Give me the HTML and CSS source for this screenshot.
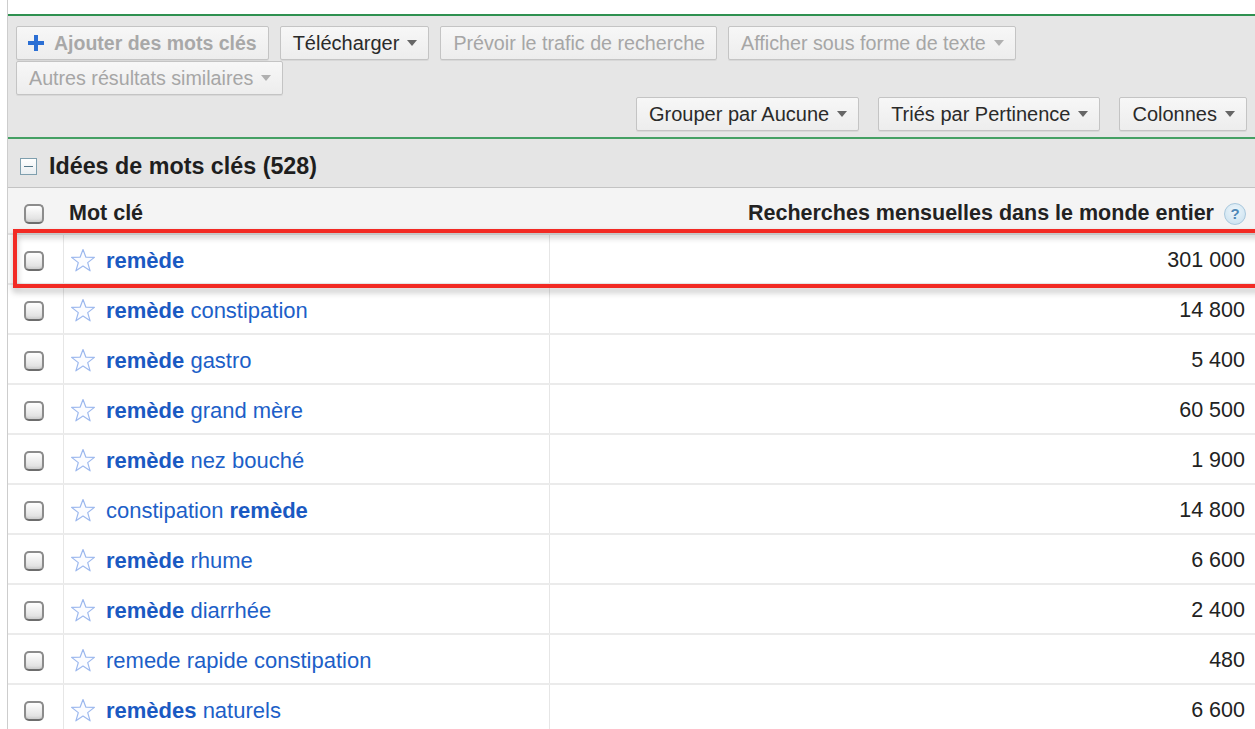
FILE: index.html
```html
<!DOCTYPE html>
<html lang="fr">
<head>
<meta charset="utf-8">
<title>Idées de mots clés</title>
<link rel="stylesheet" href="styles.css">
</head>
<body>
<div class="page">
  <div class="panel">
    <div class="toolbar">
      <div class="tb-row">
        <button class="btn btn-off btn-add">
          <svg class="plus" viewBox="0 0 16 16" width="16" height="16"><path d="M6 0h4v6h6v4h-6v6h-4v-6h-6v-4h6z" fill="#2b6fd4"/></svg>
          Ajouter des mots clés
        </button>
        <button class="btn">Télécharger <span class="caret"></span></button>
        <button class="btn btn-off">Prévoir le trafic de recherche</button>
        <button class="btn btn-off">Afficher sous forme de texte <span class="caret"></span></button>
      </div>
      <div class="tb-row">
        <button class="btn btn-off">Autres résultats similaires <span class="caret"></span></button>
      </div>
      <div class="tb-row tb-right">
        <button class="btn">Grouper par Aucune <span class="caret"></span></button>
        <button class="btn">Triés par Pertinence <span class="caret"></span></button>
        <button class="btn">Colonnes <span class="caret"></span></button>
      </div>
    </div>

    <div class="results">
      <div class="group-head">
        <span class="collapse"></span>
        <span>Idées de mots clés (528)</span>
      </div>

      <div class="row row-head">
        <div class="cell cell-check"><span class="check"></span></div>
        <div class="cell cell-kw">Mot clé</div>
        <div class="cell cell-num">Recherches mensuelles dans le monde entier <span class="help">?</span></div>
      </div>

      <div class="row">
        <div class="cell cell-check"><span class="check"></span></div>
        <div class="cell cell-kw"><svg class="star" viewBox="0 0 26 25" width="26" height="25"><polygon points="13,1.5 15.9,9.2 24.4,9.4 17.7,14.6 20.1,22.8 13,18 5.9,22.8 8.3,14.6 1.6,9.4 10.1,9.2" /></svg><a class="kw"><b>remède</b></a></div>
        <div class="cell cell-num">301 000</div>
      </div>
      <div class="row">
        <div class="cell cell-check"><span class="check"></span></div>
        <div class="cell cell-kw"><svg class="star" viewBox="0 0 26 25" width="26" height="25"><polygon points="13,1.5 15.9,9.2 24.4,9.4 17.7,14.6 20.1,22.8 13,18 5.9,22.8 8.3,14.6 1.6,9.4 10.1,9.2" /></svg><a class="kw"><b>remède</b> constipation</a></div>
        <div class="cell cell-num">14 800</div>
      </div>
      <div class="row">
        <div class="cell cell-check"><span class="check"></span></div>
        <div class="cell cell-kw"><svg class="star" viewBox="0 0 26 25" width="26" height="25"><polygon points="13,1.5 15.9,9.2 24.4,9.4 17.7,14.6 20.1,22.8 13,18 5.9,22.8 8.3,14.6 1.6,9.4 10.1,9.2" /></svg><a class="kw"><b>remède</b> gastro</a></div>
        <div class="cell cell-num">5 400</div>
      </div>
      <div class="row">
        <div class="cell cell-check"><span class="check"></span></div>
        <div class="cell cell-kw"><svg class="star" viewBox="0 0 26 25" width="26" height="25"><polygon points="13,1.5 15.9,9.2 24.4,9.4 17.7,14.6 20.1,22.8 13,18 5.9,22.8 8.3,14.6 1.6,9.4 10.1,9.2" /></svg><a class="kw"><b>remède</b> grand mère</a></div>
        <div class="cell cell-num">60 500</div>
      </div>
      <div class="row">
        <div class="cell cell-check"><span class="check"></span></div>
        <div class="cell cell-kw"><svg class="star" viewBox="0 0 26 25" width="26" height="25"><polygon points="13,1.5 15.9,9.2 24.4,9.4 17.7,14.6 20.1,22.8 13,18 5.9,22.8 8.3,14.6 1.6,9.4 10.1,9.2" /></svg><a class="kw"><b>remède</b> nez bouché</a></div>
        <div class="cell cell-num">1 900</div>
      </div>
      <div class="row">
        <div class="cell cell-check"><span class="check"></span></div>
        <div class="cell cell-kw"><svg class="star" viewBox="0 0 26 25" width="26" height="25"><polygon points="13,1.5 15.9,9.2 24.4,9.4 17.7,14.6 20.1,22.8 13,18 5.9,22.8 8.3,14.6 1.6,9.4 10.1,9.2" /></svg><a class="kw">constipation <b>remède</b></a></div>
        <div class="cell cell-num">14 800</div>
      </div>
      <div class="row">
        <div class="cell cell-check"><span class="check"></span></div>
        <div class="cell cell-kw"><svg class="star" viewBox="0 0 26 25" width="26" height="25"><polygon points="13,1.5 15.9,9.2 24.4,9.4 17.7,14.6 20.1,22.8 13,18 5.9,22.8 8.3,14.6 1.6,9.4 10.1,9.2" /></svg><a class="kw"><b>remède</b> rhume</a></div>
        <div class="cell cell-num">6 600</div>
      </div>
      <div class="row">
        <div class="cell cell-check"><span class="check"></span></div>
        <div class="cell cell-kw"><svg class="star" viewBox="0 0 26 25" width="26" height="25"><polygon points="13,1.5 15.9,9.2 24.4,9.4 17.7,14.6 20.1,22.8 13,18 5.9,22.8 8.3,14.6 1.6,9.4 10.1,9.2" /></svg><a class="kw"><b>remède</b> diarrhée</a></div>
        <div class="cell cell-num">2 400</div>
      </div>
      <div class="row">
        <div class="cell cell-check"><span class="check"></span></div>
        <div class="cell cell-kw"><svg class="star" viewBox="0 0 26 25" width="26" height="25"><polygon points="13,1.5 15.9,9.2 24.4,9.4 17.7,14.6 20.1,22.8 13,18 5.9,22.8 8.3,14.6 1.6,9.4 10.1,9.2" /></svg><a class="kw">remede rapide constipation</a></div>
        <div class="cell cell-num">480</div>
      </div>
      <div class="row">
        <div class="cell cell-check"><span class="check"></span></div>
        <div class="cell cell-kw"><svg class="star" viewBox="0 0 26 25" width="26" height="25"><polygon points="13,1.5 15.9,9.2 24.4,9.4 17.7,14.6 20.1,22.8 13,18 5.9,22.8 8.3,14.6 1.6,9.4 10.1,9.2" /></svg><a class="kw"><b>remèdes</b> naturels</a></div>
        <div class="cell cell-num">6 600</div>
      </div>

      <div class="highlight"></div>
    </div>
  </div>
</div>
</body>
</html>
```

FILE: styles.css
```css
html, body {
  margin: 0;
  padding: 0;
  background: #fff;
  overflow: hidden;
  font-family: "Liberation Sans", Arial, sans-serif;
  color: #222;
}

.page {
  padding-left: 7px;
}

.panel {
  border-left: 1px solid #cdcdcd;
  padding-top: 14px;
  min-height: 729px;
}

/* ---- toolbar ---- */
.toolbar {
  background: #e6e6e6;
  border-top: 2px solid #2f9150;
  border-bottom: 2px solid #45a064;
  padding: 10px 8px 6px 8px;
  display: flex;
  flex-direction: column;
  gap: 1px;
}

.tb-row {
  display: flex;
  gap: 11px;
}

.tb-right {
  justify-content: flex-end;
  gap: 19px;
  margin-top: 1px;
}

.btn {
  height: 34px;
  box-sizing: border-box;
  display: inline-flex;
  align-items: center;
  padding: 0 11px 0 12px;
  border: 1px solid #c4c4c4;
  border-radius: 2px;
  background: linear-gradient(#f7f7f7, #ededed);
  box-shadow: 0 1px 0 rgba(0, 0, 0, 0.06);
  font-family: inherit;
  font-size: 20px;
  color: #2a2a2a;
  white-space: nowrap;
}

.btn-off {
  font-size: 19.7px;
  color: #a6a6a6;
}

.btn-add {
  font-weight: bold;
  font-size: 19.5px;
  padding-left: 11px;
  color: #a8a8a8;
}

.plus {
  margin-right: 10px;
}

.caret {
  display: inline-block;
  width: 0;
  height: 0;
  margin-left: 8px;
  border-left: 5.5px solid transparent;
  border-right: 5.5px solid transparent;
  border-top: 6px solid #666;
}

.btn-off .caret {
  border-top-color: #b0b0b0;
}

/* ---- results ---- */
.results {
  position: relative;
}

.group-head {
  height: 49px;
  box-sizing: border-box;
  background: #e5e5e5;
  border-bottom: 1px solid #c3c3c3;
  display: flex;
  align-items: center;
  gap: 12px;
  padding: 6px 0 0 12px;
  font-size: 23.3px;
  font-weight: bold;
  color: #1e1e1e;
}

.collapse {
  position: relative;
  width: 17px;
  height: 17px;
  box-sizing: border-box;
  border: 1px solid #7f9fae;
  background: linear-gradient(#ffffff, #e9eef1);
}

.collapse::after {
  content: "";
  position: absolute;
  left: 3px;
  right: 3px;
  top: 7px;
  height: 1px;
  background: #55788a;
}

.row {
  display: grid;
  grid-template-columns: 56px 486px 1fr;
  height: 50px;
  box-sizing: border-box;
  border-bottom: 2px solid #ebebeb;
  background: #fff;
}

.row-head {
  height: 47px;
  padding-top: 3px;
  background: #f4f4f4;
  border-bottom-color: #e2e2e2;
  font-size: 21.5px;
  font-weight: bold;
  color: #222;
}

.cell {
  display: flex;
  align-items: center;
  min-width: 0;
}

.row .cell {
  padding-top: 3px;
}

.row .cell-check,
.row .cell-kw {
  border-right: 1px solid #e6e6e6;
}

.row-head .cell-check,
.row-head .cell-kw {
  border-right: none;
}

.cell-check {
  padding-left: 16px;
}

.cell-kw {
  padding-left: 6px;
  gap: 10px;
}

.row-head .cell-kw {
  padding-left: 5px;
}

.cell-num {
  justify-content: flex-end;
  padding-right: 10px;
  font-size: 21.5px;
  color: #222;
}

.row-head .cell-num {
  padding-right: 9px;
  font-size: 21.5px;
  gap: 10px;
}

.check {
  width: 20px;
  height: 20px;
  box-sizing: border-box;
  border: 2px solid #8c8c8c;
  border-bottom-color: #6d6d6d;
  border-radius: 5px;
  background: linear-gradient(#ffffff, #dcdcdc);
  box-shadow: inset 0 -2px 2px rgba(0, 0, 0, 0.06);
}

.star {
  flex: none;
}

.star polygon {
  fill: #fbfcff;
  stroke: #9cb8ee;
  stroke-width: 1.2;
  stroke-linejoin: round;
}

.kw {
  font-size: 22px;
  color: #1d5fc8;
  white-space: nowrap;
}

.kw b {
  color: #1a59c2;
}

.help {
  width: 22px;
  height: 22px;
  box-sizing: border-box;
  border-radius: 50%;
  border: 1px solid #a9c8dd;
  background: radial-gradient(circle at 50% 35%, #eef6fb, #c6dfee);
  color: #4f88b6;
  font-size: 15px;
  font-weight: bold;
  display: inline-flex;
  align-items: center;
  justify-content: center;
}

/* red frame drawn over the first keyword row */
.highlight {
  position: absolute;
  left: 5px;
  top: 90px;
  width: calc(100% + 20px);
  height: 59px;
  box-sizing: border-box;
  border: 4px solid #f22a24;
  border-right: none;
  filter: drop-shadow(0 4px 3px rgba(0, 0, 0, 0.28));
  pointer-events: none;
}
```
